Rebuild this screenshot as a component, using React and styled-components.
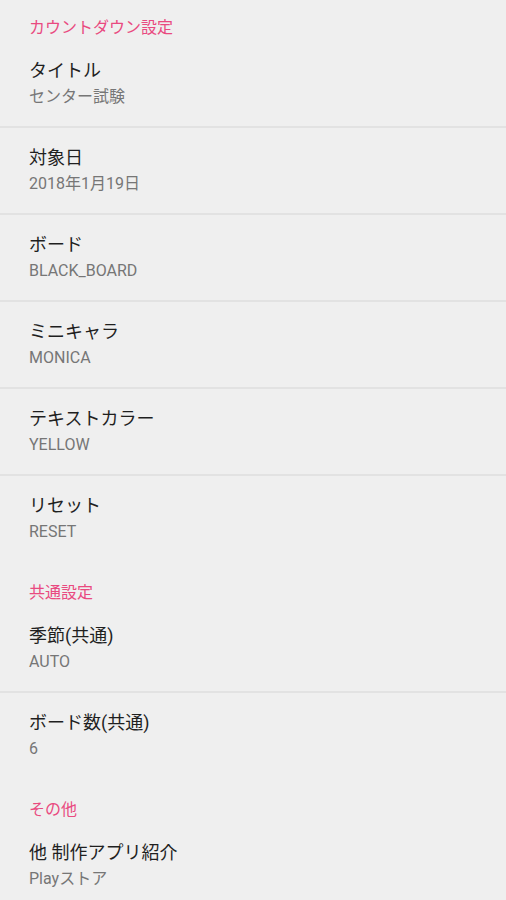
import React from "react";
import styled, { createGlobalStyle } from "styled-components";

const GlobalStyle = createGlobalStyle`
  html, body {
    margin: 0;
    padding: 0;
    background: #efefef;
  }
  body {
    font-family: Roboto, "Noto Sans CJK JP", sans-serif;
  }
`;

const Page = styled.div`
  width: 506px;
  min-height: 900px;
  background: #efefef;
  overflow: hidden;
`;

const Group = styled.section`
  display: flex;
  flex-direction: column;
`;

const GroupTitle = styled.div`
  padding: ${({ $first }) => ($first ? "18px" : "21px")} 29px 3px;
  font-size: 16px;
  line-height: 20px;
  color: #e94a80;
`;

const Row = styled.div`
  display: flex;
  flex-direction: column;
  padding: 18px 29px 19px;
  border-bottom: ${({ $last }) => ($last ? "none" : "2px solid #e2e2e2")};
  margin-bottom: ${({ $last }) => ($last ? "1px" : "0")};
`;

const RowTitle = styled.div`
  font-size: 18px;
  line-height: 24px;
  color: #1f1f1f;
`;

const RowValue = styled.div`
  margin-top: 4px;
  font-size: 16px;
  line-height: 20px;
  color: #767676;
`;

const groups = [
  {
    title: "カウントダウン設定",
    items: [
      ["タイトル", "センター試験"],
      ["対象日", "2018年1月19日"],
      ["ボード", "BLACK_BOARD"],
      ["ミニキャラ", "MONICA"],
      ["テキストカラー", "YELLOW"],
      ["リセット", "RESET"],
    ],
  },
  {
    title: "共通設定",
    items: [
      ["季節(共通)", "AUTO"],
      ["ボード数(共通)", "6"],
    ],
  },
  {
    title: "その他",
    items: [["他 制作アプリ紹介", "Playストア"]],
  },
];

const App = () => {
  return (
    <Page>
      <GlobalStyle />
      {groups.map((g, gi) => (
        <Group key={g.title}>
          <GroupTitle $first={gi === 0}>{g.title}</GroupTitle>
          {g.items.map(([t, v], i) => (
            <Row key={t} $last={i === g.items.length - 1}>
              <RowTitle>{t}</RowTitle>
              <RowValue>{v}</RowValue>
            </Row>
          ))}
        </Group>
      ))}
    </Page>
  );
};

export default App;
